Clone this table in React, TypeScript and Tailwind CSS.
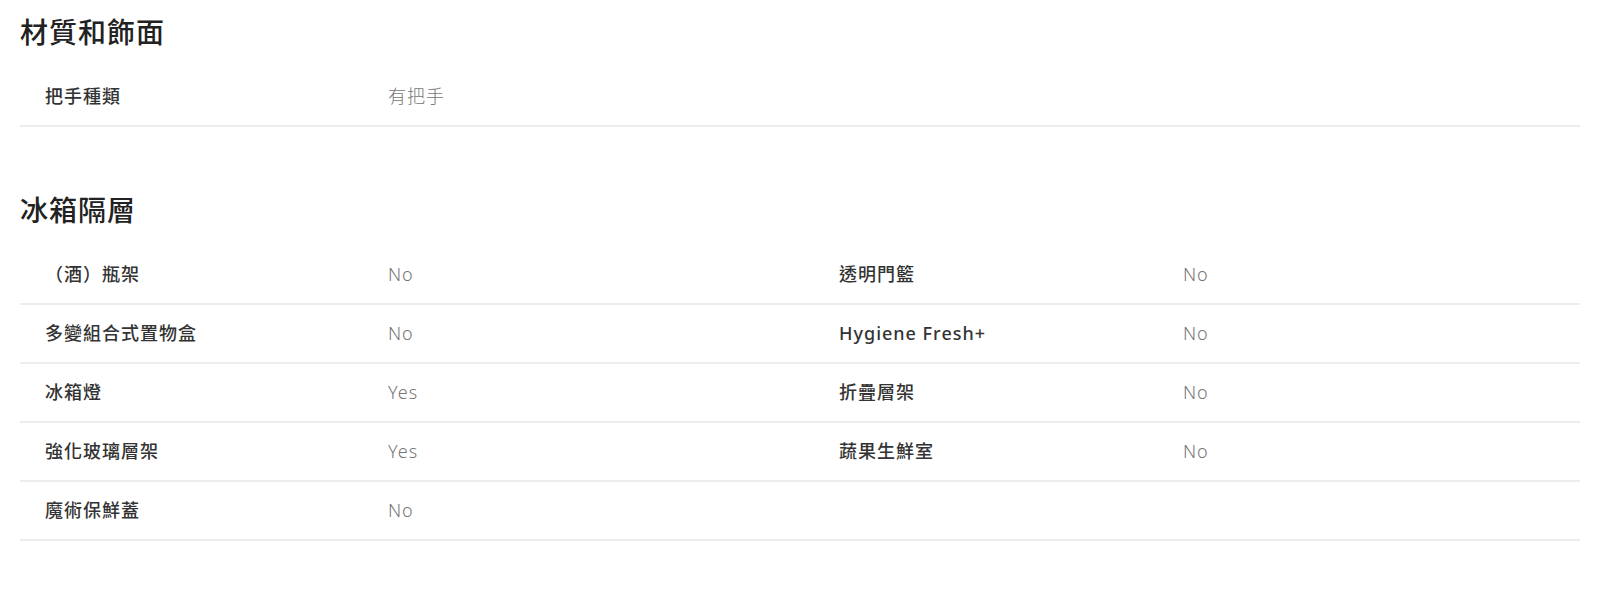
import React from "react";

const font = {
  fontFamily: '"Noto Sans", "Noto Sans CJK TC", sans-serif',
};

type Cell = { label: string; value: string };

function Row({ left, right }: { left: Cell; right?: Cell }) {
  return (
    <div className="grid h-[59px] grid-cols-[343px_451px_344px_1fr] items-center border-b-2 border-[#ededed] pl-[25px] text-[18px] tracking-[1px]">
      <div className="font-medium text-[#333333]">{left.label}</div>
      <div className="font-light text-[#767676]">{left.value}</div>
      <div className="font-medium text-[#333333]">{right?.label ?? ""}</div>
      <div className="font-light text-[#767676]">{right?.value ?? ""}</div>
    </div>
  );
}

export default function App() {
  return (
    <div className="min-h-[606px] bg-white px-[20px] pt-[15px]" style={font}>
      <h2 className="text-[28px] leading-[34px] tracking-[1px] font-medium text-[#222222]">材質和飾面</h2>
      <div className="mt-[19px]">
        <div className="grid h-[59px] grid-cols-[343px_1fr] items-center border-b-2 border-[#ededed] pl-[25px] text-[18px] tracking-[1px]">
          <div className="font-medium text-[#333333]">把手種類</div>
          <div className="font-light text-[#767676]">有把手</div>
        </div>
      </div>

      <h2 className="mt-[66px] text-[28px] leading-[34px] tracking-[1px] font-medium text-[#222222]">冰箱隔層</h2>
      <div className="mt-[19px]">
        <Row left={{ label: "（酒）瓶架", value: "No" }} right={{ label: "透明門籃", value: "No" }} />
        <Row left={{ label: "多變組合式置物盒", value: "No" }} right={{ label: "Hygiene Fresh+", value: "No" }} />
        <Row left={{ label: "冰箱燈", value: "Yes" }} right={{ label: "折疊層架", value: "No" }} />
        <Row left={{ label: "強化玻璃層架", value: "Yes" }} right={{ label: "蔬果生鮮室", value: "No" }} />
        <Row left={{ label: "魔術保鮮蓋", value: "No" }} />
      </div>
    </div>
  );
}
